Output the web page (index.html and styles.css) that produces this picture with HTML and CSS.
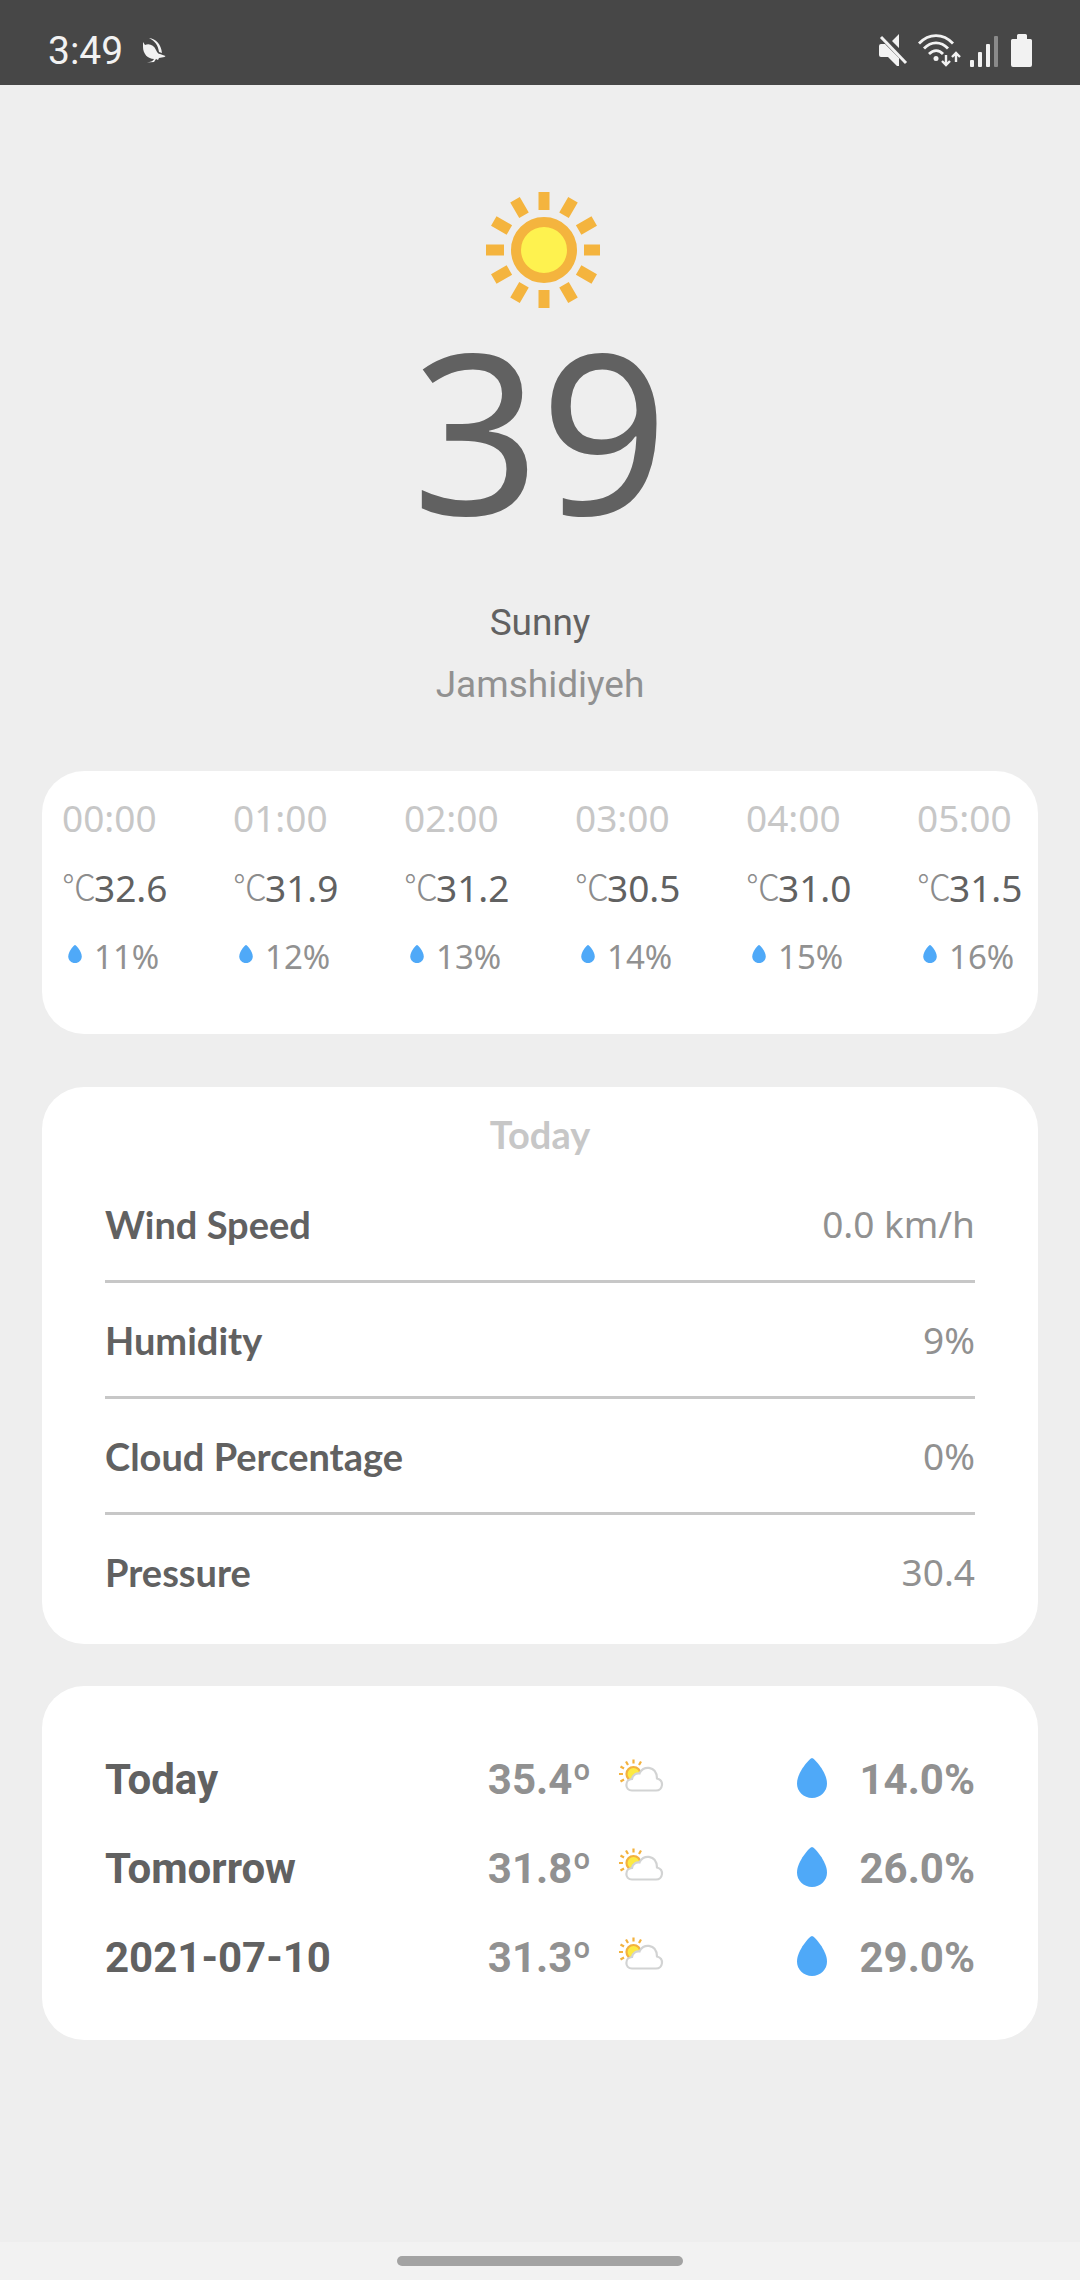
FILE: index.html
```html
<!DOCTYPE html>
<html lang="en">
<head>
<meta charset="utf-8">
<meta name="viewport" content="width=device-width, initial-scale=1">
<title>Weather</title>
<link rel="stylesheet" href="styles.css">
</head>
<body>
<svg class="defs" aria-hidden="true">
  <symbol id="drop" viewBox="0 0 30 40"><path d="M15 0C17 0 30 14 30 25.500C30 33.500 23.500 40 15 40S0 33.500 0 25.500C0 14 13 0 15 0Z" fill="#4fa9f8"/></symbol>
  <symbol id="partly" viewBox="0 0 46 34">
    <g stroke="#f3b23e" stroke-width="2.200" fill="none">
      <circle cx="15.500" cy="16" r="7" fill="#fdea43"/>
      <path d="M15.500 1.500V5.500M8 3.500L10 7M23 3.500L21 7M2.500 8.500L6 10.500M1 16H5M2.500 23.500L6 21.500"/>
    </g>
    <path d="M14 32.500C6.500 32.500 6.500 21.500 14 21C14.500 17 18 15 21.500 15.500C24 7.500 38.500 7 39 20.500C46.500 22.500 45 32.500 38 32.500Z" fill="#fff" stroke="#d2d3d3" stroke-width="2.200"/>
  </symbol>
</svg>
<div class="screen">
  <header class="status">
    <span class="clock">3:49</span>
    <svg class="bird" viewBox="0 0 24 25" fill="#f2f2f2"><path d="M1 4L3 7C7 5 12 7 14 12C15 14 16 16 18 16L23.500 18L22.500 19L17 20L16 22L14 21L12 24L5 24.500C8 24 11 23.500 12 21C6 21 1 16 1 9ZM7 0C14 1 19 6 20 15L17 14C16 7 13 3 7 0Z"/></svg>
    <div class="indicators">
      <svg class="mute" viewBox="0 0 30 33" fill="#f2f2f2"><path d="M0 12Q0 10 2 10H6L20 24V32H18L9 23H2Q0 23 0 21ZM20 0V14L13 7Z"/><path d="M2 3L27 29" stroke="#f2f2f2" stroke-width="3" fill="none"/></svg>
      <svg class="wifi" viewBox="0 0 43 33" fill="none" stroke="#f2f2f2" stroke-width="2.800"><path d="M1 9.500C11-1 25-1 35 9.500M6 14.500C13 7 23 7 30 14.500M11 20C15.500 15.500 21 15.500 25 20"/><circle cx="18" cy="24.500" r="2.500" fill="#f2f2f2" stroke="none"/><path d="M28 21V30M24 27L28 31L32 27M38 28V20M34 23L38 19L42 23" stroke-width="2.400"/></svg>
      <svg class="signal" viewBox="0 0 28 31" fill="#f2f2f2"><rect y="24" width="4" height="7" rx="1"/><rect x="8" y="16" width="4" height="15" rx="1"/><rect x="16" y="8" width="4" height="23" rx="1"/><rect x="24" width="4" height="31" rx="1" fill="#8a8a8a"/></svg>
      <svg class="battery" viewBox="0 0 21 33" fill="#f2f2f2"><path d="M6 5V1.500Q6 0 7.500 0H14.500Q16 0 16 1.500V5H19.500Q21 5 21 6.500V31Q21 33 19 33H2Q0 33 0 31V6.500Q0 5 1.500 5Z"/></svg>
    </div>
  </header>

  <main class="content">
    <section class="hero">
      <svg class="sun" viewBox="-64 -60 120 120">
        <circle r="28" fill="#fef24f" stroke="#f4b43e" stroke-width="10"/>
        <g stroke="#f4b43e" stroke-width="11">
          <path d="M0-58V-40M0 58V40M-58 0H-40M58 0H40"/>
          <path d="M0-58V-40M0 58V40M-58 0H-40M58 0H40" transform="rotate(30)"/>
          <path d="M0-58V-40M0 58V40M-58 0H-40M58 0H40" transform="rotate(60)"/>
        </g>
      </svg>
      <h1 class="now">39</h1>
      <p class="condition">Sunny</p>
      <p class="place">Jamshidiyeh</p>
    </section>

    <ul class="card hours">
      <li class="hour"><span class="time">00:00</span><span class="temp"><span class="unit">℃</span>32.6</span><span class="rain"><svg><use href="#drop"/></svg>11%</span></li>
      <li class="hour"><span class="time">01:00</span><span class="temp"><span class="unit">℃</span>31.9</span><span class="rain"><svg><use href="#drop"/></svg>12%</span></li>
      <li class="hour"><span class="time">02:00</span><span class="temp"><span class="unit">℃</span>31.2</span><span class="rain"><svg><use href="#drop"/></svg>13%</span></li>
      <li class="hour"><span class="time">03:00</span><span class="temp"><span class="unit">℃</span>30.5</span><span class="rain"><svg><use href="#drop"/></svg>14%</span></li>
      <li class="hour"><span class="time">04:00</span><span class="temp"><span class="unit">℃</span>31.0</span><span class="rain"><svg><use href="#drop"/></svg>15%</span></li>
      <li class="hour"><span class="time">05:00</span><span class="temp"><span class="unit">℃</span>31.5</span><span class="rain"><svg><use href="#drop"/></svg>16%</span></li>
    </ul>

    <section class="card today">
      <h2 class="title">Today</h2>
      <dl class="details">
        <div class="detail"><dt>Wind Speed</dt><dd>0.0 km/h</dd></div>
        <div class="detail"><dt>Humidity</dt><dd>9%</dd></div>
        <div class="detail"><dt>Cloud Percentage</dt><dd>0%</dd></div>
        <div class="detail"><dt>Pressure</dt><dd>30.4</dd></div>
      </dl>
    </section>

    <section class="card forecast">
      <table class="days">
        <tr><th class="day" scope="row">Today</th><td class="high">35.4º</td><td><svg class="sky"><use href="#partly"/></svg></td><td><span class="chance"><svg><use href="#drop"/></svg>14.0%</span></td></tr>
        <tr><th class="day" scope="row">Tomorrow</th><td class="high">31.8º</td><td><svg class="sky"><use href="#partly"/></svg></td><td><span class="chance"><svg><use href="#drop"/></svg>26.0%</span></td></tr>
        <tr><th class="day" scope="row">2021-07-10</th><td class="high">31.3º</td><td><svg class="sky"><use href="#partly"/></svg></td><td><span class="chance"><svg><use href="#drop"/></svg>29.0%</span></td></tr>
      </table>
    </section>
  </main>

  <footer class="navbar"><span class="handle"></span></footer>
</div>
</body>
</html>
```
FILE: styles.css
```css
* { box-sizing: border-box; margin: 0; padding: 0; }

body {
  background: #eee;
  color: #616161;
  font-family: "Noto Sans", "Open Sans", sans-serif;
  font-size: 37px;
}

.defs { display: none; }
svg { display: block; flex: none; }

.screen { display: flex; flex-direction: column; min-height: 100vh; }

/* System status bar */
.status {
  display: flex;
  align-items: center;
  height: 85px;
  padding: 16px 48px 0;
  background: #474747;
  color: #f2f2f2;
  font-family: Roboto, sans-serif;
}
.clock { font-size: 39px; }
.bird { width: 24px; height: 25px; margin-left: 19px; }
.indicators { display: flex; align-items: flex-end; gap: 9px; margin-left: auto; }
.mute { width: 30px; height: 33px; }
.wifi { width: 43px; height: 33px; }
.signal { width: 28px; height: 31px; }
.battery { width: 21px; height: 33px; margin-left: 4px; }

.content { flex: 1; padding: 0 42px; }
.card { background: #fff; border-radius: 42px; }

/* Current conditions */
.hero {
  display: flex;
  flex-direction: column;
  align-items: center;
  padding: 105px 0 55px;
  font-family: Roboto, sans-serif;
}
.sun { width: 120px; height: 120px; }
.now {
  margin-bottom: 44px;
  font: 400 224px/238px "Noto Sans", "Open Sans", sans-serif;
}
.condition, .place { font-size: 37px; line-height: 62px; }
.place { color: #919191; }

/* Hourly strip */
.hours {
  display: flex;
  margin-bottom: 53px;
  padding: 12px 0 44px 20px;
  list-style: none;
  overflow-x: auto;
  scrollbar-width: none;
}
.hour { display: flex; flex: 0 0 171px; flex-direction: column; }
.time { color: #c7c7c7; line-height: 70px; }
.temp { display: flex; line-height: 70px; }
.unit { width: 32px; color: #8c8c8c; font-family: "Noto Sans CJK JP", sans-serif; font-size: 34px; font-weight: 300; line-height: 66px; }
.rain { display: flex; align-items: center; gap: 12px; padding-left: 6px; color: #919191; font-size: 33px; line-height: 67px; }
.rain svg { width: 14px; height: 18px; margin-bottom: 5px; }

/* Details */
.today { margin-bottom: 42px; padding: 14px 63px 16px; }
.title { color: #c7c7c7; font: 700 38px/66px Lato, sans-serif; text-align: center; }
.detail { display: flex; justify-content: space-between; padding: 2px 0 1px; border-bottom: 3px solid #c7c7c7; line-height: 110px; }
.detail:last-child { border-bottom: 0; }
.detail dt { font-family: Lato, sans-serif; font-size: 38px; font-weight: 700; }
.detail dd { color: #919191; }

/* Daily forecast */
.forecast { padding: 49px 63px 38px; font: 700 42px/89px Roboto, sans-serif; }
.days { width: 100%; border-collapse: collapse; table-layout: fixed; color: #919191; }
.day { width: 44%; color: #616161; text-align: left; }
.high { width: 15%; }
.sky { width: 46px; height: 34px; margin-bottom: 9px; }
.chance { display: flex; align-items: center; justify-content: flex-end; gap: 32px; }
.chance svg { width: 30px; height: 40px; margin-bottom: 4px; }

/* Gesture bar */
.navbar { display: flex; align-items: center; justify-content: center; height: 38px; background: #f2f2f2; }
.handle { width: 286px; height: 10px; border-radius: 5px; background: #a3a3a3; }
```
